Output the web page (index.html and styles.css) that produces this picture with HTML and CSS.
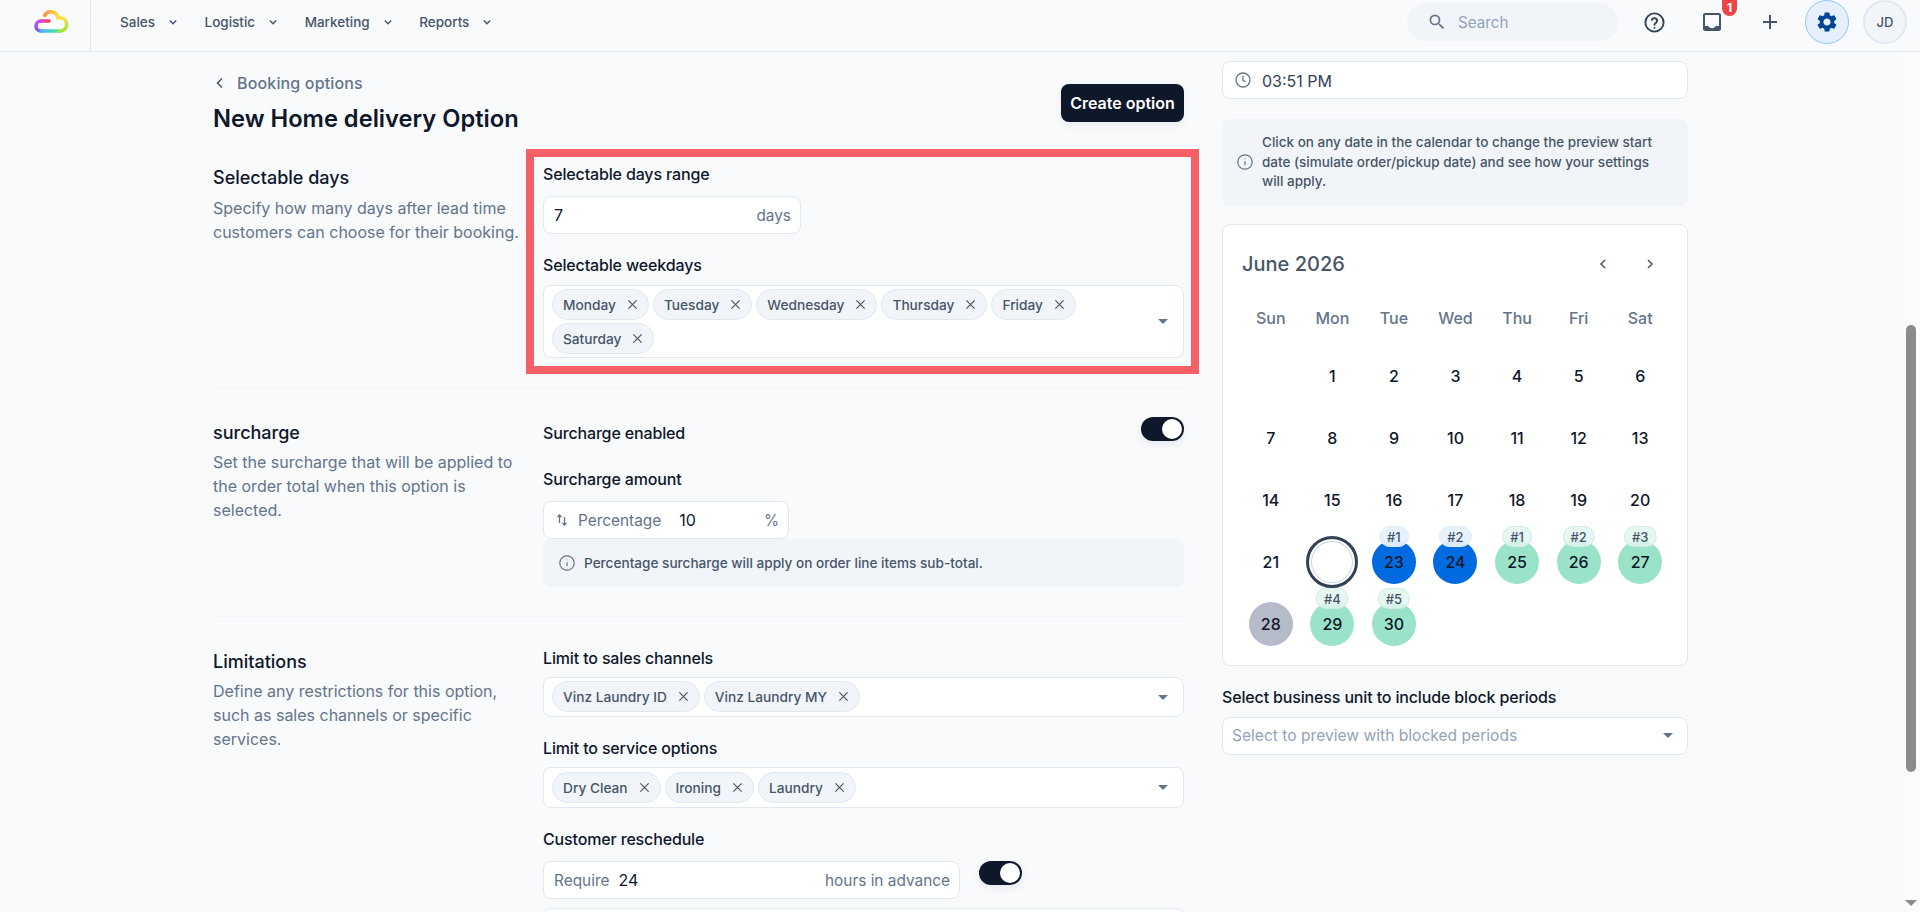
FILE: index.html
```html
<!DOCTYPE html>
<html lang="en">
<head>
<meta charset="utf-8">
<title>New Home delivery Option</title>
<link rel="stylesheet" href="styles.css">
</head>
<body>
<header class="topbar">
  <div class="brand">
    <svg class="logo" width="36" height="26" viewBox="33 8 36 26" fill="none" stroke-width="3.600" stroke-linecap="round">
      <defs>
        <linearGradient id="g1" gradientUnits="userSpaceOnUse" x1="49" y1="0" x2="37" y2="0"><stop offset="0" stop-color="#f43f5e"/><stop offset="1" stop-color="#d946ef"/></linearGradient>
        <linearGradient id="g2" gradientUnits="userSpaceOnUse" x1="0" y1="21" x2="0" y2="31"><stop offset="0" stop-color="#d946ef"/><stop offset="1" stop-color="#6366f1"/></linearGradient>
        <linearGradient id="g3" gradientUnits="userSpaceOnUse" x1="41" y1="0" x2="62" y2="0"><stop offset="0" stop-color="#60a5fa"/><stop offset=".45" stop-color="#34d8c8"/><stop offset="1" stop-color="#84e84a"/></linearGradient>
        <linearGradient id="g4" gradientUnits="userSpaceOnUse" x1="0" y1="31" x2="0" y2="17"><stop offset="0" stop-color="#a3e635"/><stop offset="1" stop-color="#fde047"/></linearGradient>
        <linearGradient id="g5" gradientUnits="userSpaceOnUse" x1="58" y1="0" x2="44" y2="0"><stop offset="0" stop-color="#fde047"/><stop offset="1" stop-color="#fb923c"/></linearGradient>
      </defs>
      <path d="M49 21H41" stroke="url(#g1)"/>
      <path d="M41 21a5 5 0 0 0 0 10" stroke="url(#g2)"/>
      <path d="M41 31H60.500" stroke="url(#g3)"/>
      <path d="M60.500 31a6.700 6.700 0 0 0 .5-13.300h-3" stroke="url(#g4)"/>
      <path d="M58 17.700a7.200 7.200 0 0 0-13.300-2.400" stroke="url(#g5)"/>
    </svg>
  </div>
  <nav class="mainnav">
    <a class="navitem">Sales<svg class="navchev" viewBox="0 0 12 12" width="12" height="12"><path d="M2.800 4.500 6 7.700l3.200-3.200"/></svg></a>
    <a class="navitem">Logistic<svg class="navchev" viewBox="0 0 12 12" width="12" height="12"><path d="M2.800 4.500 6 7.700l3.200-3.200"/></svg></a>
    <a class="navitem">Marketing<svg class="navchev" viewBox="0 0 12 12" width="12" height="12"><path d="M2.800 4.500 6 7.700l3.200-3.200"/></svg></a>
    <a class="navitem">Reports<svg class="navchev" viewBox="0 0 12 12" width="12" height="12"><path d="M2.800 4.500 6 7.700l3.200-3.200"/></svg></a>
  </nav>
  <div class="tools">
    <div class="search">
      <svg viewBox="0 0 24 24" width="20" height="20"><path class="fill-slate" d="M15.500 14h-.79l-.28-.27A6.470 6.470 0 0 0 16 9.500 6.500 6.500 0 1 0 9.500 16c1.610 0 3.090-.59 4.230-1.570l.27.28v.79l5 4.990L20.490 19l-4.990-5zm-6 0C7.010 14 5 11.990 5 9.500S7.010 5 9.500 5 14 7.010 14 9.500 11.990 14 9.500 14z"/></svg>
      <span>Search</span>
    </div>
    <div class="hicons">
      <button class="hicon"><svg viewBox="0 0 24 24" width="23" height="23" fill="none" stroke="#334155" stroke-width="2" stroke-linecap="round"><circle cx="12" cy="12" r="9.500"/><path d="M9.200 9.300a2.900 2.900 0 0 1 5.600 1c0 1.900-2.800 2.500-2.800 4"/><path d="M12 17.500h.01"/></svg></button>
      <button class="hicon inbox"><svg viewBox="0 0 24 24" width="24" height="24"><path fill="#475569" d="M19 3H5c-1.100 0-2 .9-2 2v14c0 1.100.9 2 2 2h14c1.100 0 2-.9 2-2V5c0-1.110-.9-2-2-2zm0 13h-3.500c0 1.200-1.500 2.200-3.500 2.200s-3.500-1-3.500-2.200H5V5h14v11z"/></svg><span class="badge">1</span></button>
      <button class="hicon"><svg viewBox="0 0 14 14" width="14" height="14" fill="none" stroke="#475569" stroke-width="2"><path d="M7 0v14M0 7h14"/></svg></button>
    </div>
    <button class="gearbtn"><svg viewBox="0 0 24 24" width="24" height="24"><path fill="#004494" d="M19.140 12.940c.04-.3.06-.61.06-.94 0-.32-.02-.64-.07-.94l2.030-1.580c.18-.14.23-.41.12-.61l-1.920-3.320c-.12-.22-.37-.29-.59-.22l-2.390.96c-.5-.38-1.030-.7-1.620-.94l-.36-2.540c-.04-.24-.24-.41-.48-.41h-3.840c-.24 0-.43.17-.47.41l-.36 2.540c-.59.24-1.130.57-1.620.94l-2.390-.96c-.22-.08-.47 0-.59.22L2.740 8.870c-.12.21-.08.47.12.61l2.030 1.580c-.05.3-.09.63-.09.94s.02.64.07.94l-2.030 1.580c-.18.14-.23.41-.12.61l1.920 3.320c.12.22.37.29.59.22l2.390-.96c.5.38 1.030.7 1.620.94l.36 2.540c.05.24.24.41.48.41h3.840c.24 0 .44-.17.47-.41l.36-2.540c.59-.24 1.130-.56 1.620-.94l2.390.96c.22.08.47 0 .59-.22l1.920-3.320c.12-.22.07-.47-.12-.61l-2.010-1.580zM12 15.600c-1.980 0-3.600-1.620-3.600-3.600s1.620-3.600 3.600-3.600 3.600 1.620 3.600 3.600-1.620 3.600-3.600 3.600z"/></svg></button>
    <div class="avatar">JD</div>
  </div>
</header>

<main class="page">
  <div class="form">
    <div class="head">
      <div>
        <a class="crumb"><svg viewBox="0 0 12 14" width="12" height="14" fill="none" stroke="#475569" stroke-width="1.500"><path d="M8 2.500 3.500 7 8 11.500"/></svg>Booking options</a>
        <h1>New Home delivery Option</h1>
      </div>
      <button class="primary">Create option</button>
    </div>

    <section class="section first">
      <div class="sec-info">
        <h2>Selectable days</h2>
        <p>Specify how many days after lead time customers can choose for their booking.</p>
      </div>
      <div class="sec-fields highlighted">
        <div class="highlight"></div>
        <div class="field">
          <label>Selectable days range</label>
          <div class="input w-days"><span class="val grow">7</span><span class="muted">days</span></div>
        </div>
        <div class="field">
          <label>Selectable weekdays</label>
          <div class="multi">
            <div class="tags">
              <span class="tag">Monday<svg class="x" viewBox="0 0 12 12"><path d="M1.500 1.500l9 9M10.500 1.500l-9 9"/></svg></span>
              <span class="tag">Tuesday<svg class="x" viewBox="0 0 12 12"><path d="M1.500 1.500l9 9M10.500 1.500l-9 9"/></svg></span>
              <span class="tag">Wednesday<svg class="x" viewBox="0 0 12 12"><path d="M1.500 1.500l9 9M10.500 1.500l-9 9"/></svg></span>
              <span class="tag">Thursday<svg class="x" viewBox="0 0 12 12"><path d="M1.500 1.500l9 9M10.500 1.500l-9 9"/></svg></span>
              <span class="tag">Friday<svg class="x" viewBox="0 0 12 12"><path d="M1.500 1.500l9 9M10.500 1.500l-9 9"/></svg></span>
              <span class="tag">Saturday<svg class="x" viewBox="0 0 12 12"><path d="M1.500 1.500l9 9M10.500 1.500l-9 9"/></svg></span>
            </div>
            <span class="caret"></span>
          </div>
        </div>
      </div>
    </section>

    <section class="section second">
      <div class="sec-info">
        <h2>surcharge</h2>
        <p>Set the surcharge that will be applied to the order total when this option is selected.</p>
      </div>
      <div class="sec-fields">
        <div class="toggle-row">
          <label>Surcharge enabled</label>
          <span class="switch"><i></i></span>
        </div>
        <div class="field tight">
          <label>Surcharge amount</label>
          <div class="input w-pct">
            <svg class="swap" viewBox="0 0 14 14" width="14" height="14" fill="none" stroke="#64748b" stroke-width="1.300"><path d="M4.500 10V2M2.500 4l2-2 2 2M9.500 4v8M7.500 10l2 2 2-2"/></svg>
            <span class="muted pct-label">Percentage</span><span class="val grow">10</span><span class="muted">%</span>
          </div>
          <div class="note">
            <svg viewBox="0 0 16 16" width="16" height="16" fill="none" stroke="#64748b" stroke-width="1.200"><circle cx="8" cy="8" r="7.200"/><path d="M8 7.200v4M8 4.600v.6"/></svg>
            <span>Percentage surcharge will apply on order line items sub-total.</span>
          </div>
        </div>
      </div>
    </section>

    <section class="section third">
      <div class="sec-info">
        <h2>Limitations</h2>
        <p>Define any restrictions for this option, such as sales channels or specific services.</p>
      </div>
      <div class="sec-fields">
        <div class="field">
          <label>Limit to sales channels</label>
          <div class="multi">
            <div class="tags">
              <span class="tag">Vinz Laundry ID<svg class="x" viewBox="0 0 12 12"><path d="M1.500 1.500l9 9M10.500 1.500l-9 9"/></svg></span>
              <span class="tag">Vinz Laundry MY<svg class="x" viewBox="0 0 12 12"><path d="M1.500 1.500l9 9M10.500 1.500l-9 9"/></svg></span>
            </div>
            <span class="caret"></span>
          </div>
        </div>
        <div class="field">
          <label>Limit to service options</label>
          <div class="multi roomy">
            <div class="tags">
              <span class="tag">Dry Clean<svg class="x" viewBox="0 0 12 12"><path d="M1.500 1.500l9 9M10.500 1.500l-9 9"/></svg></span>
              <span class="tag">Ironing<svg class="x" viewBox="0 0 12 12"><path d="M1.500 1.500l9 9M10.500 1.500l-9 9"/></svg></span>
              <span class="tag">Laundry<svg class="x" viewBox="0 0 12 12"><path d="M1.500 1.500l9 9M10.500 1.500l-9 9"/></svg></span>
            </div>
            <span class="caret"></span>
          </div>
        </div>
        <div class="field">
          <label>Customer reschedule</label>
          <div class="resched">
            <div class="input w-req"><span class="muted req-label">Require</span><span class="val grow">24</span><span class="muted">hours in advance</span></div>
            <span class="switch"><i></i></span>
          </div>
          <div class="input cutoff"></div>
        </div>
      </div>
    </section>
  </div>

  <aside class="preview">
    <div class="input time">
      <svg viewBox="0 0 16 16" width="16" height="16" fill="none" stroke="#64748b" stroke-width="1.300"><circle cx="8" cy="8" r="7"/><path d="M8 4v4.300l2.600 1.400"/></svg>
      <span class="timeval">03:51 PM</span>
    </div>
    <div class="tip">
      <svg viewBox="0 0 16 16" width="16" height="16" fill="none" stroke="#64748b" stroke-width="1.200"><circle cx="8" cy="8" r="7.200"/><path d="M8 7.200v4M8 4.600v.6"/></svg>
      <p>Click on any date in the calendar to change the preview start date (simulate order/pickup date) and see how your settings will apply.</p>
    </div>
    <div class="calendar">
      <div class="cal-head">
        <span class="cal-title">June 2026</span>
        <div class="cal-nav">
          <svg viewBox="0 0 16 16" width="16" height="16" fill="none" stroke="#475569" stroke-width="1.500"><path d="M10 4 6 8l4 4"/></svg>
          <svg viewBox="0 0 16 16" width="16" height="16" fill="none" stroke="#475569" stroke-width="1.500"><path d="m6 4 4 4-4 4"/></svg>
        </div>
      </div>
      <div class="cal-weekdays"><span>Sun</span><span>Mon</span><span>Tue</span><span>Wed</span><span>Thu</span><span>Fri</span><span>Sat</span></div>
      <div class="cal-grid">
        <span class="cell"></span>
        <span class="cell"><b class="day">1</b></span><span class="cell"><b class="day">2</b></span><span class="cell"><b class="day">3</b></span><span class="cell"><b class="day">4</b></span><span class="cell"><b class="day">5</b></span><span class="cell"><b class="day">6</b></span>
        <span class="cell"><b class="day">7</b></span><span class="cell"><b class="day">8</b></span><span class="cell"><b class="day">9</b></span><span class="cell"><b class="day">10</b></span><span class="cell"><b class="day">11</b></span><span class="cell"><b class="day">12</b></span><span class="cell"><b class="day">13</b></span>
        <span class="cell"><b class="day">14</b></span><span class="cell"><b class="day">15</b></span><span class="cell"><b class="day">16</b></span><span class="cell"><b class="day">17</b></span><span class="cell"><b class="day">18</b></span><span class="cell"><b class="day">19</b></span><span class="cell"><b class="day">20</b></span>
        <span class="cell"><b class="day">21</b></span>
        <span class="cell"><b class="day today">22</b></span>
        <span class="cell"><b class="day blue">23<em class="pill pill-blue">#1</em></b></span>
        <span class="cell"><b class="day blue">24<em class="pill pill-blue">#2</em></b></span>
        <span class="cell"><b class="day green">25<em class="pill pill-green">#1</em></b></span>
        <span class="cell"><b class="day green">26<em class="pill pill-green">#2</em></b></span>
        <span class="cell"><b class="day green">27<em class="pill pill-green">#3</em></b></span>
        <span class="cell"><b class="day grey">28</b></span>
        <span class="cell"><b class="day green">29<em class="pill pill-green">#4</em></b></span>
        <span class="cell"><b class="day green">30<em class="pill pill-green">#5</em></b></span>
      </div>
    </div>
    <label class="bu-label">Select business unit to include block periods</label>
    <div class="input bu-select"><span class="placeholder grow">Select to preview with blocked periods</span><span class="caret"></span></div>
  </aside>

  <div class="scrollbar">
    <div class="thumb"></div>
    <div class="arrow"></div>
  </div>
</main>
</body>
</html>
```

FILE: styles.css
```css
* { box-sizing: border-box; }
html, body { margin: 0; height: 912px; overflow: hidden; }
body {
  background: #f8fafc;
  color: #0f172a;
  font-family: Inter, "Noto Sans", "Liberation Sans", sans-serif;
  font-size: 16px;
}
button { border: 0; background: none; padding: 0; font: inherit; }

/* top bar */
.topbar {
  display: flex;
  align-items: center;
  height: 52px;
  padding-bottom: 7px;
  background: #f8fafc;
  border-bottom: 1px solid #e2e8f0;
}
.brand {
  align-self: stretch;
  width: 91px;
  margin-bottom: -7px;
  padding: 8px 0 0 33px;
  border-right: 1px solid #e2e8f0;
}
.logo { display: block; }
.mainnav { display: flex; gap: 25.500px; margin-left: 29px; }
.navitem {
  display: flex;
  align-items: center;
  gap: 12px;
  font-size: 13.500px;
  font-weight: 500;
  color: #475569;
}
.navchev { fill: none; stroke: #475569; stroke-width: 1.4; }
.tools { display: flex; align-items: center; margin-left: auto; padding-right: 13px; }
.search {
  display: flex;
  align-items: center;
  gap: 11px;
  width: 211px;
  height: 38px;
  margin-right: 20px;
  padding-left: 20px;
  border-radius: 19px;
  background: #f1f5f9;
  color: #94a3b8;
  font-size: 15.200px;
}
.fill-slate { fill: #64748b; }
.hicons { display: flex; gap: 26px; margin-right: 19px; }
.hicon {
  position: relative;
  display: flex;
  align-items: center;
  justify-content: center;
  width: 32px;
  height: 32px;
}
.badge {
  position: absolute;
  top: -13px;
  left: 26px;
  width: 15px;
  height: 23px;
  padding-top: 7px;
  border-radius: 8px;
  background: #ef4444;
  color: #fff;
  font-size: 12px;
  font-weight: 700;
  line-height: 15px;
  text-align: center;
}
.gearbtn {
  display: flex;
  align-items: center;
  justify-content: center;
  width: 44px;
  height: 44px;
  margin-right: 14px;
  border: 1px solid #93c5fd;
  border-radius: 50%;
  background: #e6f0fd;
}
.avatar {
  display: flex;
  align-items: center;
  justify-content: center;
  width: 44px;
  height: 44px;
  border: 2px solid #e2e8f0;
  border-radius: 50%;
  background: #f1f5f9;
  color: #475569;
  font-size: 13px;
  font-weight: 500;
}

/* page */
.page {
  display: flex;
  gap: 38px;
  height: 860px;
  padding: 9px 0 0 213px;
  overflow: hidden;
}
.form { flex: none; width: 971px; }
.preview { flex: none; width: 466px; }
.scrollbar {
  display: flex;
  flex-direction: column;
  align-items: center;
  flex: none;
  width: 18px;
  height: 860px;
  margin: -9px 0 0 auto;
  padding: 273px 0 6px;
  background: #fbfbfc;
}
.thumb { width: 10px; height: 447px; border-radius: 5px; background: #8b8b8b; }
.arrow {
  margin-top: auto;
  border-style: solid;
  border-width: 6px 6px 0;
  border-color: #8b8b8b transparent transparent;
}

/* heading */
.head { display: flex; align-items: center; justify-content: space-between; padding-top: 10px; }
.crumb {
  display: flex;
  align-items: center;
  gap: 11px;
  padding-left: 1px;
  font-size: 16px;
  font-weight: 500;
  letter-spacing: .15px;
  line-height: 24px;
  color: #64748b;
}
h1 { margin: 8px 0 0; font-size: 23.700px; font-weight: 600; line-height: 32px; }
.primary {
  height: 38px;
  padding: 0 9px;
  width: 123px;
  border-radius: 8px;
  background: #0f172a;
  color: #fff;
  font-size: 16px;
  font-weight: 600;
  box-shadow: 0 4px 10px rgba(15, 23, 42, .06);
}

/* sections */
.section {
  display: grid;
  grid-template-columns: 330px 1fr;
  padding: 29px 0;
  border-bottom: 1px solid #f1f5f9;
}
.section.first { padding-top: 27px; }
.section.third { border-bottom: 0; }
h2 { margin: 2px 0 0; font-size: 18px; font-weight: 500; line-height: 28px; }
.sec-info p { width: 318px; margin: 4px 0 0; line-height: 24px; color: #64748b; }
.second .sec-info p, .third .sec-info p { margin-top: 3px; }
.sec-fields { position: relative; }
.highlight {
  position: absolute;
  top: -13px;
  right: -15px;
  bottom: -16px;
  left: -17px;
  border: 8px solid #f56067;
  pointer-events: none;
}
label { display: block; font-size: 16px; font-weight: 500; letter-spacing: -.15px; line-height: 24px; }
.field + .field { margin-top: 19px; }

/* controls */
.input {
  display: flex;
  align-items: center;
  height: 38px;
  padding: 0 9px 0 10px;
  border: 1px solid #e2e8f0;
  border-radius: 8px;
  background: #fff;
}
.field > .input { margin-top: 10px; }
.grow { flex: 1; }
.muted { color: #64748b; font-size: 15.400px; }
.w-days { width: 258px; }
.w-pct { width: 246px; padding-left: 11px; }
.swap { margin-right: 9px; }
.pct-label { margin-right: 18px; }
.w-req { width: 417px; }
.req-label { margin-right: 9px; }
.multi {
  display: flex;
  align-items: center;
  min-height: 40px;
  margin-top: 7px;
  padding: 3px 15px 3px 8px;
  border: 1px solid #e2e8f0;
  border-radius: 8px;
  background: #fff;
}
.first .multi { margin-top: 8px; }
.multi.roomy { padding-top: 4px; padding-bottom: 4px; }
.tags { display: flex; flex-wrap: wrap; flex: 1; gap: 3px 4px; align-self: flex-start; }
.tag {
  display: flex;
  align-items: center;
  gap: 11px;
  height: 31px;
  padding: 0 10px;
  border: 1px solid #e2e8f0;
  border-radius: 16px;
  background: #f1f5f9;
  color: #475569;
  font-size: 13.700px;
  font-weight: 500;
}
.x { width: 11px; height: 11px; fill: none; stroke: #475569; stroke-width: 1.3; }
.caret {
  flex: none;
  border-style: solid;
  border-width: 5px 5px 0;
  border-color: #64748b transparent transparent;
}
.toggle-row { display: flex; align-items: flex-start; justify-content: space-between; }
.toggle-row label { margin-top: 4px; }
.tight { margin-top: 22px; }
.switch {
  display: flex;
  flex: none;
  justify-content: flex-end;
  width: 43px;
  height: 24px;
  padding: 2px;
  border-radius: 12px;
  background: #0f172a;
  box-shadow: 0 3px 8px rgba(15, 23, 42, .08);
}
.switch i { width: 20px; height: 20px; border-radius: 50%; background: #fff; }
.note {
  display: flex;
  align-items: center;
  gap: 9px;
  height: 48px;
  padding-left: 16px;
  border-radius: 8px;
  background: #f1f5f9;
  color: #475569;
  font-size: 13.600px;
  font-weight: 500;
}
.resched { display: flex; align-items: flex-start; gap: 19px; margin-top: 10px; }
.field > .cutoff { margin-top: 9px; }

/* preview column */
.time { gap: 11px; padding-left: 12px; }
.timeval { color: #334155; padding-top: 1px; }
.tip {
  display: flex;
  align-items: center;
  gap: 9px;
  margin-top: 20px;
  padding: 14px 22px 14px 15px;
  border-radius: 8px;
  background: #f1f5f9;
  color: #475569;
  font-size: 13.500px;
  font-weight: 500;
  line-height: 19.500px;
}
.tip svg { flex: none; }
.tip p { margin: 0; }
.calendar {
  height: 442px;
  margin-top: 18px;
  padding: 25px 16px 0 17px;
  border: 1px solid #e2e8f0;
  border-radius: 8px;
  background: #fff;
}
.cal-head { display: flex; align-items: center; justify-content: space-between; height: 28px; padding: 0 13px 0 2px; }
.cal-title { font-size: 20px; font-weight: 500; color: #475569; }
.cal-nav { display: flex; gap: 31px; }
.cal-weekdays, .cal-grid { display: grid; grid-template-columns: repeat(7, 1fr); }
.cal-weekdays {
  margin-top: 28px;
  color: #64748b;
  font-weight: 500;
  line-height: 24px;
  text-align: center;
}
.cal-grid { grid-auto-rows: 62px; margin-top: 15px; }
.cell { display: flex; align-items: center; justify-content: center; }
.day {
  position: relative;
  display: flex;
  align-items: center;
  justify-content: center;
  width: 44px;
  height: 44px;
  border-radius: 50%;
  font-weight: 500;
}
.today {
  width: 52px;
  height: 52px;
  border: 3px solid #334155;
  background: #fff;
  color: #fff;
  box-shadow: inset 0 0 0 2px #fff, inset 0 0 0 3px #cbd5e1;
}
.blue { background: #006be0; }
.green { background: #9ae3c8; }
.grey { background: #b6bbc9; }
.pill {
  position: absolute;
  top: -14px;
  left: 50%;
  height: 21px;
  padding: 0 7px;
  transform: translateX(-50%);
  border-radius: 11px;
  color: #475569;
  font-size: 13px;
  font-style: normal;
  font-weight: 500;
  line-height: 20px;
}
.pill-blue { background: rgba(230, 240, 253, .95); border: 1px solid #e3edfa; }
.pill-green { background: rgba(226, 245, 238, .85); border: 1px solid rgba(205, 235, 224, .8); }
.bu-label { margin-top: 19px; }
.bu-select { margin-top: 8px; padding: 0 14px 0 9px; }
.placeholder { color: #94a3b8; font-size: 15.600px; }
```
